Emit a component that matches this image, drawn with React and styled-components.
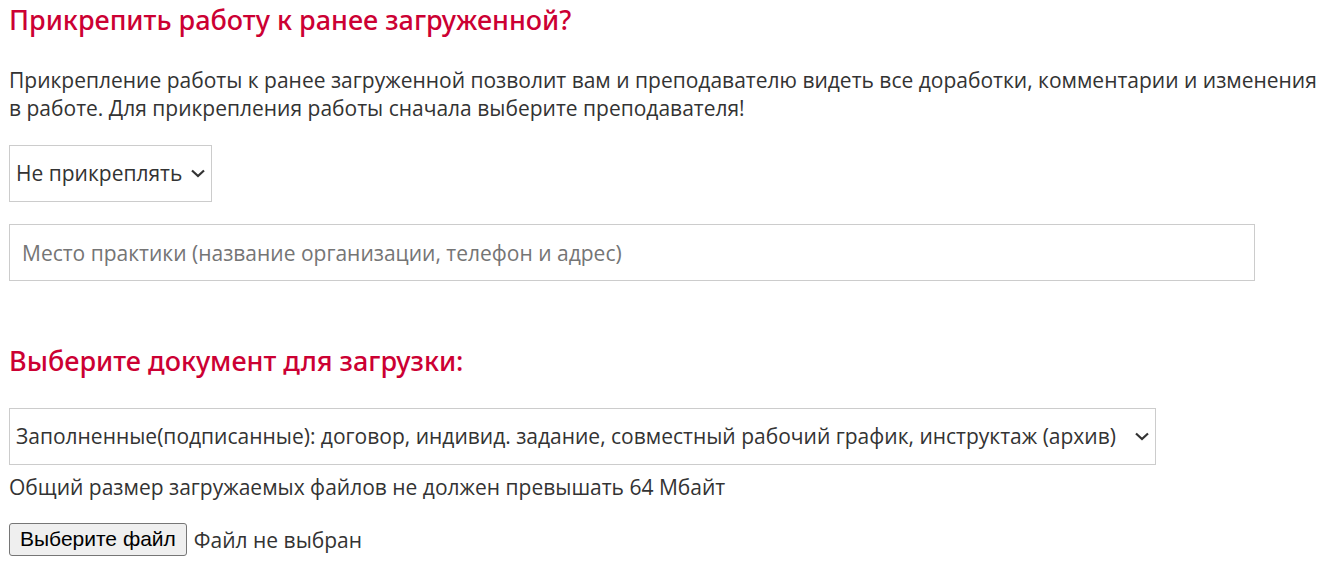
import React from "react";
import styled, { createGlobalStyle } from "styled-components";

const Global = createGlobalStyle`
  *, *::before, *::after { box-sizing: border-box; }
  body {
    margin: 0;
    background: #fff;
    color: #333;
    font: 21px/28px "Open Sans", "Noto Sans", sans-serif;
  }
`;

const Form = styled.form`
  display: flex;
  flex-direction: column;
  align-items: flex-start;
  padding: 0 8px 0 9px;
`;

const Heading = styled.h2`
  margin: ${(p) => (p.$spaced ? "60px 0 27px" : "0 0 26px")};
  color: #cc0033;
  font: 500 27px/40px "Noto Sans", "Open Sans", sans-serif;
`;

const Text = styled.p`
  margin: 0 0 23px;
`;

const Note = styled.p`
  margin: 8px 0 22px;
`;

const SelectBox = styled.div`
  position: relative;
  display: flex;
  width: ${(p) => (p.$wide ? "87%" : "auto")};
  max-width: 100%;
  margin-bottom: ${(p) => (p.$spaced ? "22px" : "0")};
`;

const Select = styled.select`
  appearance: none;
  width: 100%;
  height: 57px;
  margin: 0;
  padding: 0 28px 2px 6px;
  border: 1px solid #ccc;
  border-radius: 0;
  background: #fff;
  color: #333;
  font: inherit;
`;

const Arrow = styled.svg`
  position: absolute;
  right: 6px;
  top: 20px;
  pointer-events: none;
`;

const TextInput = styled.input`
  width: calc(100% - 72px);
  height: 57px;
  padding: 0 12px;
  border: 1px solid #ccc;
  background: #fff;
  color: #333;
  font: inherit;
  &::placeholder { color: #757575; opacity: 1; }
`;

const FileInput = styled.div`
  display: flex;
  align-items: center;
  gap: 7px;
`;

const FileButton = styled.button`
  height: 33px;
  padding: 0 10px 2px;
  border: 1px solid #767676;
  border-radius: 3px;
  background: #efefef;
  color: #000;
  font: 21px/28px "Liberation Sans", Arial, sans-serif;
`;

function Dropdown({ label, value, spaced, wide }) {
  return (
    <SelectBox $spaced={spaced} $wide={wide}>
      <Select aria-label={label}>
        <option>{value}</option>
      </Select>
      <Arrow width="16" height="16" viewBox="0 0 16 16" aria-hidden="true">
        <path d="M2 5.5 8 11 14 5.5" fill="none" stroke="#333" strokeWidth="2.2" />
      </Arrow>
    </SelectBox>
  );
}

export default function App() {
  return (
    <>
      <Global />
      <Form onSubmit={(e) => e.preventDefault()}>
        <Heading>Прикрепить работу к ранее загруженной?</Heading>
        <Text>
          Прикрепление работы к ранее загруженной позволит вам и преподавателю видеть все доработки,
          комментарии и изменения в работе. Для прикрепления работы сначала выберите преподавателя!
        </Text>
        <Dropdown label="Прикрепить работу" value="Не прикреплять" spaced />
        <TextInput
          type="text"
          aria-label="Место практики"
          placeholder="Место практики (название организации, телефон и адрес)"
        />
        <Heading $spaced>Выберите документ для загрузки:</Heading>
        <Dropdown
          wide
          label="Документ для загрузки"
          value="Заполненные(подписанные): договор, индивид. задание, совместный рабочий график, инструктаж (архив)"
        />
        <Note>Общий размер загружаемых файлов не должен превышать 64 Мбайт</Note>
        <FileInput>
          <FileButton type="button">Выберите файл</FileButton>
          <span>Файл не выбран</span>
        </FileInput>
      </Form>
    </>
  );
}
